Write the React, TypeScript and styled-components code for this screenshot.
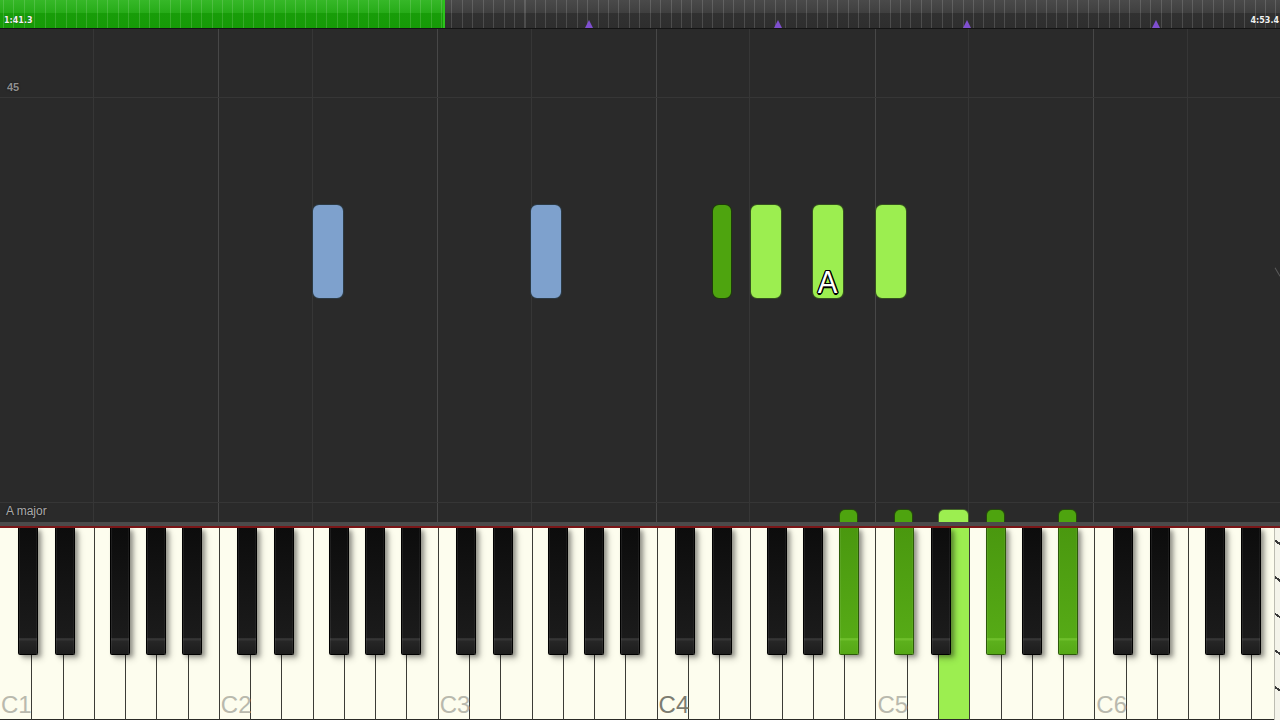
import React from "react";
import styled, { createGlobalStyle } from "styled-components";

const KEY = 31.27;
const OCT = KEY * 7;

const GlobalStyle = createGlobalStyle`
  html, body { margin: 0; padding: 0; background: #2a2a2a; overflow: hidden; }
  body { font-family: "Liberation Sans", Arial, sans-serif; }
`;

const Screen = styled.div`
  width: 1280px;
  height: 720px;
  display: flex;
  flex-direction: column;
  overflow: hidden;
  background: #2a2a2a;
`;

/* ---------- top progress bar ---------- */
const TopBar = styled.div`
  position: relative;
  flex: 0 0 29px;
  box-sizing: border-box;
  display: flex;
  align-items: flex-end;
  justify-content: space-between;
  padding: 0 1px 3px 4px;
  border-bottom: 1px solid #141414;
  overflow: hidden;
  background: linear-gradient(to bottom, #4a4a4a 0, #3f3f3f 13px, #313131 13px, #2e2e2e 100%);
`;

const Fill = styled.div`
  position: absolute;
  left: 0;
  top: 0;
  bottom: 0;
  background: linear-gradient(to bottom, #36b828 0, #26ab18 13px, #189d09 13px, #169a07 100%);
  border-right: 2px solid #2cc21c;
`;

const Ticks = styled.div`
  position: absolute;
  inset: 0;
  background: repeating-linear-gradient(
    90deg,
    rgba(255, 255, 255, 0.14) 0 1px,
    transparent 1px 10.43px
  );
  background-position: 3px 0;
`;

const Marker = styled.div<{ $x: number }>`
  position: absolute;
  bottom: 0;
  left: ${(p) => p.$x - 4}px;
  width: 0;
  height: 0;
  border-left: 4px solid transparent;
  border-right: 4px solid transparent;
  border-bottom: 8px solid #7f4fcf;
`;

const Time = styled.span`
  position: relative;
  font-family: "DejaVu Sans", "Liberation Sans", sans-serif;
  font-size: 8px;
  line-height: 1;
  font-weight: bold;
  color: #f2f2f2;
  white-space: nowrap;
  text-shadow: 0 0 1px rgba(0, 0, 0, 0.6);
`;

/* ---------- piano roll (free canvas) ---------- */
const Roll = styled.div`
  position: relative;
  flex: 0 0 493px;
  background: #2a2a2a;
  overflow: hidden;
`;

const VLine = styled.div<{ $x: number; $strong?: boolean }>`
  position: absolute;
  top: 0;
  bottom: 0;
  left: ${(p) => Math.round(p.$x) - 1}px;
  width: 1px;
  background: ${(p) => (p.$strong ? "#474747" : "#363636")};
`;

const HLine = styled.div<{ $y: number }>`
  position: absolute;
  left: 0;
  right: 0;
  top: ${(p) => p.$y}px;
  height: 1px;
  background: #363636;
`;

const MeasureNo = styled.span`
  position: absolute;
  left: 7px;
  top: 52px;
  font-size: 11px;
  font-weight: bold;
  color: #8f8f8f;
  text-shadow: 0 0 2px #111;
`;

const KeyName = styled.span`
  position: absolute;
  left: 6px;
  top: 475px;
  font-size: 12px;
  color: #ababab;
  text-shadow: 0 0 2px #111;
`;

const Note = styled.div<{ $x: number; $y: number; $w: number; $h: number; $c: string }>`
  position: absolute;
  box-sizing: border-box;
  left: ${(p) => p.$x}px;
  top: ${(p) => p.$y}px;
  width: ${(p) => p.$w}px;
  height: ${(p) => p.$h}px;
  background: ${(p) => p.$c};
  border: 1px solid rgba(10, 14, 10, 0.7);
  border-radius: 7px;
  display: flex;
  align-items: flex-end;
  justify-content: center;
`;

const Stub = styled.div<{ $x: number; $w: number; $c: string }>`
  position: absolute;
  box-sizing: border-box;
  left: ${(p) => p.$x}px;
  bottom: 0;
  width: ${(p) => p.$w}px;
  height: 13px;
  background: ${(p) => p.$c};
  border: 1px solid rgba(10, 14, 10, 0.6);
  border-bottom: none;
  border-radius: 6px 6px 0 0;
`;

const NoteLetter = styled.span`
  font-size: 32px;
  line-height: 1;
  color: #ffffff;
  transform: scaleX(0.92);
  text-shadow:
    1.5px 0 0 #000, -1.5px 0 0 #000, 0 1.5px 0 #000, 0 -1.5px 0 #000,
    1px 1px 0 #000, -1px -1px 0 #000, 1px -1px 0 #000, -1px 1px 0 #000;
`;

const EdgeMark = styled.div`
  position: absolute;
  left: 1277px;
  top: 238px;
  width: 1px;
  height: 10px;
  background: #5a5a5a;
  transform: rotate(-30deg);
`;

/* ---------- divider ---------- */
const GrayBand = styled.div`
  flex: 0 0 4px;
  background: #4b4b4b;
`;

const RedBand = styled.div`
  flex: 0 0 2px;
  background: #7a1618;
`;

/* ---------- keyboard ---------- */
const Keyboard = styled.div`
  position: relative;
  flex: 0 0 192px;
  display: flex;
  overflow: hidden;
  background: #fdfdee;
`;

const WhiteKey = styled.div<{ $pressed?: boolean; $first?: boolean }>`
  position: relative;
  flex: 0 0 ${KEY}px;
  width: ${KEY}px;
  min-width: 0;
  box-sizing: border-box;
  border-left: ${(p) => (p.$first ? "none" : "1px solid #3c3c36")};
  border-bottom: 1px solid #2a2a26;
  background: ${(p) => (p.$pressed ? "#9cee50" : "#fdfdee")};
  display: flex;
  align-items: flex-end;
  overflow: visible;
`;

const KeyLabel = styled.span<{ $dark?: boolean }>`
  font-size: 24px;
  line-height: 1;
  padding: 0 0 2px 1px;
  white-space: nowrap;
  color: ${(p) => (p.$dark ? "#7c7c70" : "#b9b9ad")};
  position: relative;
  z-index: 1;
`;

const BlackKey = styled.div<{ $x: number; $pressed?: boolean }>`
  position: absolute;
  top: 0;
  left: ${(p) => p.$x}px;
  width: 20px;
  height: 127px;
  box-sizing: border-box;
  z-index: 2;
  border: 1px solid ${(p) => (p.$pressed ? "#2c5a08" : "#000")};
  border-top: none;
  border-radius: 0 0 2px 2px;
  background: ${(p) =>
    p.$pressed
      ? "linear-gradient(to bottom, #4a980f 0, #56aa16 87%, #74c430 88%, #5cb01c 90%, #55a816 100%)"
      : "linear-gradient(to bottom, #0c0c0c 0, #1b1b1b 87%, #3a3a3a 88%, #262626 90%, #1c1c1c 100%)"};
  box-shadow:
    inset 1px 0 0 rgba(255, 255, 255, 0.07),
    inset -1px 0 0 rgba(255, 255, 255, 0.05),
    3px 2px 4px rgba(0, 0, 0, 0.35),
    5px 5px 6px rgba(0, 0, 0, 0.12);
`;

const EdgeStrip = styled.div`
  position: absolute;
  top: 0;
  right: 0;
  bottom: 0;
  width: 5px;
  z-index: 3;
  background:
    repeating-linear-gradient(
      35deg,
      transparent 0 26px,
      #3a3a3a 26px 28px,
      transparent 28px 30px
    ),
    #f4f4ea;
  border-left: 1px solid #bdbdb2;
`;

const NAMES = ["C", "D", "E", "F", "G", "A", "B"];
const BLACK_OFFSETS: [string, number][] = [
  ["C#", 18.3],
  ["D#", 55.3],
  ["F#", 110.3],
  ["G#", 146.3],
  ["A#", 182.3],
];

const pressedBlack = new Set(["A#4", "C#5", "F#5", "A#5"]);
const pressedWhite = new Set(["E5"]);

const cLines = [1, 2, 3, 4, 5].map((i) => i * OCT);
const fLines = [0, 1, 2, 3, 4, 5].map((i) => i * OCT + 3 * KEY);

const notes = [
  { x: 312, w: 32, c: "#7ea1cd" },
  { x: 530, w: 32, c: "#7ea1cd" },
  { x: 712, w: 20, c: "#4ea40f" },
  { x: 750, w: 32, c: "#9cee50" },
  { x: 812, w: 32, c: "#9cee50", label: "A" },
  { x: 875, w: 32, c: "#9cee50" },
];

const stubs = [
  { x: 839, w: 19, c: "#4ea40f" },
  { x: 894, w: 19, c: "#4ea40f" },
  { x: 938, w: 31, c: "#9cee50" },
  { x: 986, w: 19, c: "#4ea40f" },
  { x: 1058, w: 19, c: "#4ea40f" },
];

export default function App() {
  const whites = Array.from({ length: 41 }, (_, i) => {
    const name = NAMES[i % 7];
    const octave = Math.floor(i / 7) + 1;
    return { id: `${name}${octave}`, name, octave, i };
  });
  const blacks: { id: string; x: number }[] = [];
  for (let o = 0; o < 6; o++) {
    BLACK_OFFSETS.forEach(([n, off]) => {
      blacks.push({ id: `${n}${o + 1}`, x: o * OCT + off });
    });
  }

  return (
    <>
      <GlobalStyle />
      <Screen>
        <TopBar>
          <Fill style={{ width: 443 }} />
          <Ticks />
          {[589, 778, 967, 1156].map((x) => (
            <Marker key={x} $x={x} />
          ))}
          <Time>1:41.3</Time>
          <Time>4:53.4</Time>
        </TopBar>

        <Roll>
          {fLines.map((x) => (
            <VLine key={`f${x}`} $x={x} />
          ))}
          {cLines.map((x) => (
            <VLine key={`c${x}`} $x={x} $strong />
          ))}
          <HLine $y={68} />
          <HLine $y={473} />
          <MeasureNo>45</MeasureNo>
          <KeyName>A major</KeyName>
          {notes.map((n) => (
            <Note key={n.x} $x={n.x} $y={175} $w={n.w} $h={95} $c={n.c}>
              {n.label && <NoteLetter>{n.label}</NoteLetter>}
            </Note>
          ))}
          {stubs.map((s) => (
            <Stub key={s.x} $x={s.x} $w={s.w} $c={s.c} />
          ))}
          <EdgeMark />
        </Roll>

        <GrayBand />
        <RedBand />

        <Keyboard>
          {whites.map((k) => (
            <WhiteKey key={k.id} $first={k.i === 0} $pressed={pressedWhite.has(k.id)}>
              {k.name === "C" && <KeyLabel $dark={k.octave === 4}>{k.id}</KeyLabel>}
            </WhiteKey>
          ))}
          {blacks.map((b) => (
            <BlackKey key={b.id} $x={b.x} $pressed={pressedBlack.has(b.id)} />
          ))}
          <EdgeStrip />
        </Keyboard>
      </Screen>
    </>
  );
}
